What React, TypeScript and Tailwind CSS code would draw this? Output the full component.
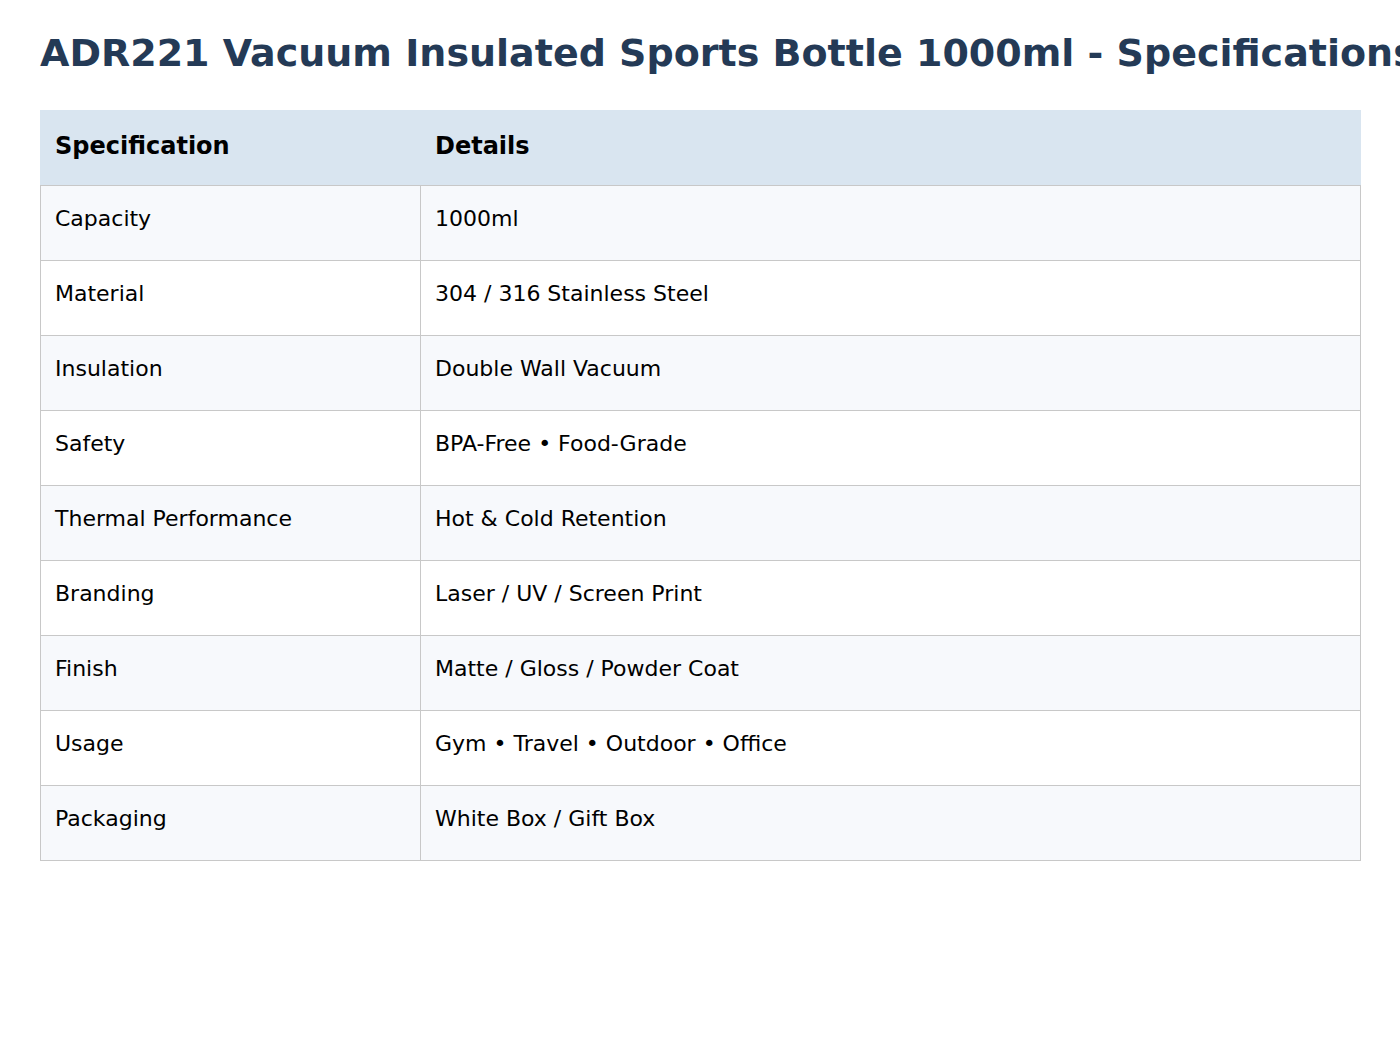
const specs: [string, string][] = [
  ['Capacity', '1000ml'],
  ['Material', '304 / 316 Stainless Steel'],
  ['Insulation', 'Double Wall Vacuum'],
  ['Safety', 'BPA-Free • Food-Grade'],
  ['Thermal Performance', 'Hot & Cold Retention'],
  ['Branding', 'Laser / UV / Screen Print'],
  ['Finish', 'Matte / Gloss / Powder Coat'],
  ['Usage', 'Gym • Travel • Outdoor • Office'],
  ['Packaging', 'White Box / Gift Box'],
];

export default function App() {
  return (
    <div className="min-h-[1050px] bg-white px-[40px] pt-[31px] font-['DejaVu_Sans',sans-serif] overflow-hidden">
      <h1 className="text-[38px] leading-[44px] font-bold text-[#243a56] whitespace-nowrap mb-[35px]">
        ADR221 Vacuum Insulated Sports Bottle 1000ml - Specifications
      </h1>

      <div className="w-[1321px]">
        <div className="grid grid-cols-[381px_1fr] h-[75px] bg-[#d9e5f0] text-black text-[24px] leading-[28px] font-bold">
          <div className="pl-[15px] pt-[22px]">Specification</div>
          <div className="pl-[14px] pt-[22px]">Details</div>
        </div>

        <div className="border-t border-l border-r border-[#c8c8c8]">
          {specs.map(([label, value], i) => (
            <div
              key={label}
              className={
                'grid grid-cols-[380px_1fr] h-[75px] border-b border-[#c8c8c8] text-[22px] leading-[26px] text-black ' +
                (i % 2 === 0 ? 'bg-[#f7f9fc]' : 'bg-white')
              }
            >
              <div className="pl-[14px] pt-[20px] border-r border-[#c8c8c8]">{label}</div>
              <div className="pl-[14px] pt-[20px]">{value}</div>
            </div>
          ))}
        </div>
      </div>
    </div>
  );
}
